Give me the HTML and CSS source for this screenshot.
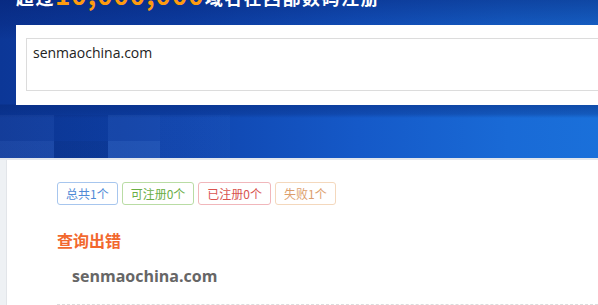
FILE: index.html
```html
<!DOCTYPE html>
<html lang="zh-CN">
<head>
<meta charset="utf-8">
<title>域名查询</title>
<link rel="stylesheet" href="styles.css">
</head>
<body>
<div class="banner">
  <div class="tiles"></div>
  <h1 class="headline">超过<span class="num">10,000,000</span>域名在西部数码注册</h1>
  <div class="search-box">
    <div class="input">senmaochina.com</div>
  </div>
</div>
<div class="main">
  <div class="side"></div>
  <div class="panel">
    <div class="tags">
      <span class="tag tag-blue">总共1个</span>
      <span class="tag tag-green">可注册0个</span>
      <span class="tag tag-red">已注册0个</span>
      <span class="tag tag-orange">失败1个</span>
    </div>
    <h2 class="err-title">查询出错</h2>
    <div class="domain">senmaochina.com</div>
    <div class="divider"></div>
  </div>
</div>
</body>
</html>
```
FILE: styles.css
```css
html, body {
  margin: 0;
  padding: 0;
}
body {
  background: #f0f3f6;
  font-family: "Noto Sans CJK SC", "Noto Sans", sans-serif;
  overflow: hidden;
}
.banner {
  position: relative;
  height: 158px;
  overflow: hidden;
  background:
    linear-gradient(180deg, rgba(4,30,110,0.5) 0px, rgba(4,30,110,0.25) 24px, rgba(0,0,0,0) 40px, rgba(0,0,0,0) 104px, rgba(6,40,120,0.5) 105px, rgba(6,40,120,0.3) 114px, rgba(0,0,0,0) 118px),
    linear-gradient(90deg, #0c3797 0%, #0f44ad 30%, #1559c8 60%, #196ad6 85%, #1a70da 100%);
}
.tiles {
  position: absolute;
  left: 0;
  top: 115px;
  width: 598px;
  height: 43px;
  background:
    linear-gradient(90deg, rgba(255,255,255,0.03) 0 54px, rgba(0,0,40,0.05) 54px 108px, rgba(255,255,255,0.04) 108px 160px, rgba(255,255,255,0.02) 160px 230px, rgba(0,0,0,0) 230px);
}
.tiles::after {
  content: "";
  position: absolute;
  left: 0;
  top: 26px;
  width: 598px;
  height: 17px;
  background: linear-gradient(90deg, rgba(120,170,255,0.08) 0 54px, rgba(0,0,30,0.06) 54px 108px, rgba(120,180,255,0.1) 108px 160px, rgba(0,0,0,0) 160px);
}
.headline {
  position: relative;
  margin: -16px 0 0 16px;
  height: 20px;
  line-height: 20px;
  font-size: 18px;
  font-weight: bold;
  letter-spacing: 1.5px;
  color: #fff;
  white-space: nowrap;
}
.num {
  color: #ff9b0f;
  font-size: 26px;
  letter-spacing: 1px;
}
.search-box {
  position: relative;
  margin: 21px 0 0 16px;
  height: 80px;
  box-sizing: border-box;
  padding: 13px 0 0 10px;
  background: #fff;
}
.input {
  height: 53px;
  width: 700px;
  box-sizing: border-box;
  border: 1px solid #dcdcdc;
  padding: 4px 0 0 6px;
  font-family: "Open Sans", "Noto Sans", sans-serif;
  font-size: 14px;
  line-height: 20px;
  color: #222;
}
.main {
  display: flex;
  height: 147px;
  border-top: 2px solid #e3e7ed;
}
.side {
  width: 6px;
  background: #eef1f4;
  border-right: 1px solid #e2e5e9;
}
.panel {
  flex: 1;
  background: #fff;
  padding: 22px 0 0 50px;
}
.tags {
  display: flex;
  gap: 4px;
}
.tag {
  box-sizing: border-box;
  height: 23px;
  line-height: 21px;
  padding: 0 8px;
  border: 1px solid;
  border-radius: 3px;
  font-size: 12px;
}
.tag-blue { color: #4f8ad6; border-color: #a7c6ee; }
.tag-green { color: #6aae45; border-color: #b9dca4; }
.tag-red { color: #d9534f; border-color: #f1b7bb; }
.tag-orange { color: #dc9e6c; border-color: #f4d8bd; }
.err-title {
  margin: 24px 0 0 0;
  font-size: 16px;
  line-height: 22px;
  font-weight: bold;
  color: #f2682e;
}
.domain {
  margin: 14px 0 0 15px;
  font-family: "Open Sans", "Noto Sans", sans-serif;
  font-size: 16px;
  font-weight: bold;
  line-height: 22px;
  color: #666;
}
.divider {
  margin-top: 17px;
  border-top: 1px dashed #dcdcdc;
}
```
